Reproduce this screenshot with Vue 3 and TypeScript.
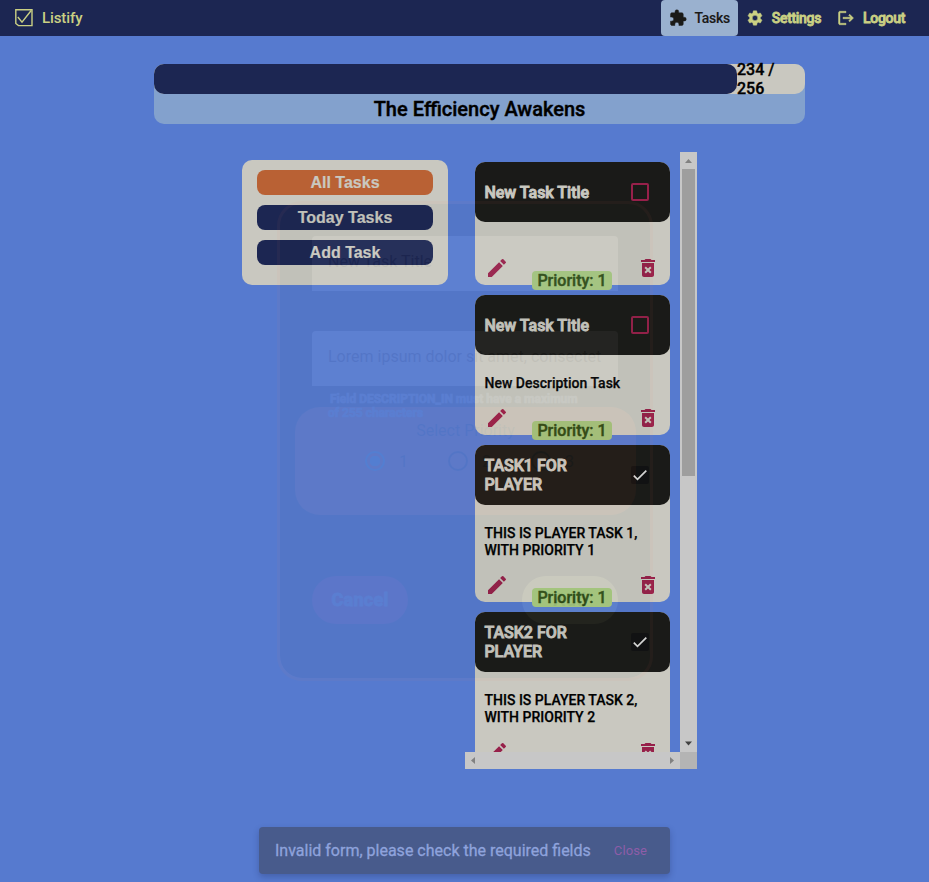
<script setup lang="ts">
interface Task {
  title: string
  description: string
  done: boolean
  priority: number
}

const tasks: Task[] = [
  { title: 'New Task Title', description: '', done: false, priority: 1 },
  { title: 'New Task Title', description: 'New Description Task', done: false, priority: 1 },
  { title: 'TASK1 FOR PLAYER', description: 'THIS IS PLAYER TASK 1, WITH PRIORITY 1', done: true, priority: 1 },
  { title: 'TASK2 FOR PLAYER', description: 'THIS IS PLAYER TASK 2, WITH PRIORITY 2', done: true, priority: 2 },
]

const filters = ['All Tasks', 'Today Tasks', 'Add Task']
const activeFilter = 'All Tasks'
const priorities = [1, 2, 3]
const selectedPriority = 1
</script>

<template>
  <div class="page">
    <nav class="navbar">
      <div class="brand">
        <svg width="18" height="18" viewBox="0 0 18 18" fill="none" stroke="currentColor">
          <path d="M.8.8H17V16.6H3.5L.8 14.5Z" stroke-width="1.4" />
          <path d="M2.8 8 7 13.2 16.2 1.5" stroke-width="1.4" />
        </svg>
        <span>Listify</span>
      </div>
      <div class="links">
        <a class="link active">
          <svg width="18" height="18" viewBox="0 0 24 24" fill="currentColor">
            <path d="M20.5 11H19V7c0-1.1-.9-2-2-2h-4V3.500a2.500 2.500 0 0 0-5 0V5H4c-1.100 0-1.990.9-1.990 2v3.800H3.500c1.490 0 2.700 1.210 2.700 2.700s-1.210 2.700-2.700 2.700H2V20c0 1.100.9 2 2 2h3.800v-1.500c0-1.490 1.210-2.700 2.700-2.700 1.490 0 2.700 1.210 2.700 2.700V22H17c1.100 0 2-.9 2-2v-4h1.500a2.500 2.500 0 0 0 0-5z" />
          </svg>
          <span>Tasks</span>
        </a>
        <a class="link">
          <svg width="18" height="18" viewBox="0 0 24 24" fill="currentColor">
            <path d="M19.140 12.940c.04-.3.060-.61.060-.94 0-.32-.02-.64-.07-.94l2.030-1.580c.18-.14.230-.41.120-.61l-1.920-3.320c-.12-.22-.37-.29-.59-.22l-2.390.96c-.5-.38-1.030-.7-1.620-.94l-.36-2.540c-.04-.24-.24-.41-.48-.41h-3.840c-.24 0-.43.17-.47.41l-.36 2.540c-.59.24-1.130.57-1.620.94l-2.390-.96c-.22-.08-.47 0-.59.22L2.740 8.870c-.12.21-.08.470.12.610l2.030 1.580c-.05.3-.09.63-.09.94s.02.640.070.940l-2.030 1.580c-.18.140-.23.410-.12.610l1.920 3.320c.12.220.37.290.59.220l2.390-.96c.5.380 1.030.700 1.620.940l.36 2.540c.05.240.24.410.48.410h3.840c.24 0 .44-.17.470-.41l.36-2.540c.59-.24 1.130-.56 1.620-.94l2.390.96c.22.080.470 0 .59-.22l1.920-3.320c.12-.22.070-.47-.12-.61l-2.010-1.580zM12 15.600A3.600 3.600 0 1 1 12 8.400a3.600 3.600 0 0 1 0 7.200z" />
          </svg>
          <span>Settings</span>
        </a>
        <a class="link">
          <svg width="18" height="18" viewBox="0 0 24 24" fill="currentColor">
            <path d="m17 7-1.410 1.410L18.170 11H8v2h10.170l-2.580 2.580L17 17l5-5zM4 5h8V3H4c-1.100 0-2 .9-2 2v14c0 1.100.9 2 2 2h8v-2H4V5z" />
          </svg>
          <span>Logout</span>
        </a>
      </div>
    </nav>

    <section class="level">
      <div class="track">
        <div class="fill"></div>
        <div class="count">234 / 256</div>
      </div>
      <div class="rank">The Efficiency Awakens</div>
    </section>

    <main class="board">
      <aside class="filters">
        <button v-for="f in filters" :key="f" class="filter" :class="{ on: f === activeFilter }">{{ f }}</button>
      </aside>

      <div class="scroller">
        <div class="viewport">
          <article v-for="(task, i) in tasks" :key="i" class="card">
            <header class="head">
              <span class="title">{{ task.title }}</span>
              <span v-if="!task.done" class="box"></span>
              <span v-else class="box done">
                <svg width="18" height="18" viewBox="0 0 18 18" fill="none" stroke="currentColor" stroke-width="1.7">
                  <path d="M2.800 9.700 6.500 13.400 15.300 4.600" />
                </svg>
              </span>
            </header>
            <p class="desc">{{ task.description }}</p>
            <footer class="actions">
              <svg width="24" height="24" viewBox="0 0 24 24" fill="currentColor">
                <path d="M3 17.250V21h3.750L17.810 9.940l-3.750-3.750L3 17.250zM20.710 7.040a1 1 0 0 0 0-1.410l-2.340-2.340a1 1 0 0 0-1.410 0l-1.830 1.830 3.750 3.750 1.830-1.830z" />
              </svg>
              <svg width="24" height="24" viewBox="0 0 24 24" fill="currentColor">
                <path fill-rule="evenodd" d="M6 19c0 1.100.9 2 2 2h8c1.100 0 2-.9 2-2V7H6v12zm2.460-7.120 1.410-1.410L12 12.590l2.120-2.120 1.410 1.410L13.410 14l2.120 2.120-1.410 1.410L12 15.410l-2.120 2.120-1.410-1.410L10.590 14l-2.130-2.120zM15.500 4l-1-1h-5l-1 1H5v2h14V4z" />
              </svg>
              <span class="badge">Priority: {{ task.priority }}</span>
            </footer>
          </article>
        </div>
        <div class="bar vertical">
          <svg width="17" height="17" viewBox="0 0 17 17"><path d="M8.500 7 12 11H5Z" fill="#818181" /></svg>
          <div class="thumb"></div>
          <svg width="17" height="17" viewBox="0 0 17 17"><path d="M8.500 10.500 12 6.500H5Z" fill="#414141" /></svg>
        </div>
        <div class="bar horizontal">
          <svg width="17" height="17" viewBox="0 0 17 17"><path d="M6 8.500 10 5V12Z" fill="#818181" /></svg>
          <svg width="17" height="17" viewBox="0 0 17 17"><path d="M11 8.500 7 5V12Z" fill="#818181" /></svg>
        </div>
        <div class="corner"></div>
      </div>
    </main>

    <form class="dialog">
      <div class="field">New Task Title</div>
      <div class="field second">Lorem ipsum dolor sit amet, consectet</div>
      <div class="error">Field DESCRIPTION_IN must have a maximum of 255 characters</div>
      <div class="priority">
        <div class="legend">Select Priority</div>
        <div class="radios">
          <label v-for="p in priorities" :key="p" class="radio" :class="{ picked: p === selectedPriority }">
            <i class="ring"></i><span>{{ p }}</span>
          </label>
        </div>
      </div>
      <div class="buttons">
        <span class="pill cancel">Cancel</span>
        <span class="pill confirm">Add</span>
      </div>
    </form>

    <div class="snackbar">
      <span class="message">Invalid form, please check the required fields</span>
      <span class="close">Close</span>
    </div>
  </div>
</template>

<style>
body {
  margin: 0;
  background: #567acf;
}
</style>

<style scoped>
.page {
  position: relative;
  height: 882px;
  overflow: hidden;
  background: #567acf;
  font-family: Roboto, sans-serif;
  font-size: 16px;
}
.page * {
  box-sizing: border-box;
}
svg {
  display: block;
  flex: none;
}
.navbar {
  height: 36px;
  background: #1c2652;
  color: #cad083;
  display: flex;
  justify-content: space-between;
  padding: 0 16px 0 15px;
}
.brand {
  display: flex;
  align-items: center;
  gap: 9px;
  font-size: 15px;
  font-weight: 500;
  letter-spacing: -0.1px;
}
.links {
  display: flex;
}
.link {
  display: flex;
  align-items: center;
  gap: 8px;
  padding: 0 8px;
  font-size: 14px;
  font-weight: 500;
  letter-spacing: -0.32px;
  -webkit-text-stroke: 0.8px currentColor;
  border-radius: 4px;
}
.link svg {
  stroke: currentColor;
  stroke-width: 0.6px;
}
.active {
  background: #9ab1cf;
  color: #1a1a18;
  -webkit-text-stroke: 0.1px currentColor;
}
.level {
  width: 651px;
  height: 60px;
  margin: 28px 0 0 154px;
  border-radius: 10px;
  background: #83a1cd;
}
.track {
  display: flex;
  align-items: center;
  height: 30px;
  border-radius: 10px;
  background: #c9c8c0;
}
.fill {
  width: 583px;
  height: 30px;
  border-radius: 10px;
  background: #1c2652;
}
.count {
  width: 60px;
  line-height: 19px;
  font-weight: 500;
  -webkit-text-stroke: 0.35px currentColor;
  color: #000;
}
.rank {
  line-height: 30px;
  text-align: center;
  font-size: 20px;
  font-weight: 500;
  -webkit-text-stroke: 0.4px currentColor;
  color: #000;
}
.board {
  display: flex;
  align-items: flex-start;
  padding: 28px 0 0 242px;
}
.filters {
  display: flex;
  flex-direction: column;
  gap: 10px;
  width: 206px;
  height: 125px;
  margin: 8px 17px 0 0;
  padding: 10px 15px;
  border-radius: 10px;
  background: #c9c8c0;
}
.filter {
  height: 25px;
  padding: 0;
  border: 0;
  border-radius: 8px;
  background: #1c2652;
  color: #c9c8c0;
  font: bold 16px 'Liberation Sans', sans-serif;
  -webkit-text-stroke: 0.2px currentColor;
}
.filter.on {
  background: #b96134;
}
.scroller {
  display: grid;
  grid-template: 600px 17px / 215px 17px;
}
.viewport {
  display: flex;
  flex-direction: column;
  gap: 10px;
  padding: 10px;
  overflow: hidden;
}
.card {
  flex: none;
  border-radius: 10px;
  background: #c9c8c0;
}
.head {
  display: flex;
  align-items: center;
  justify-content: space-between;
  height: 60px;
  padding: 0 21px 0 9.4px;
  border-radius: 10px;
  background: #1a1a18;
  color: #c9c8c0;
}
.title {
  width: 120px;
  line-height: 19px;
  font-weight: 500;
  -webkit-text-stroke: 0.9px currentColor;
}
.box {
  width: 18px;
  height: 18px;
  border: 2px solid #97204a;
  border-radius: 2px;
}
.box.done {
  border: 0;
  background: #111112;
  color: #dcdcdc;
}
.desc {
  margin: 0;
  padding: 20px 9px 0 9.5px;
  line-height: 17px;
  font-size: 14px;
  font-weight: 500;
  -webkit-text-stroke: 0.25px currentColor;
  color: #000;
}
.actions {
  position: relative;
  display: flex;
  justify-content: space-between;
  height: 43px;
  padding: 14px 10px 0 9.5px;
  color: #97204a;
}
.badge {
  position: absolute;
  left: 57px;
  bottom: -5px;
  width: 80px;
  height: 19px;
  border-radius: 4px;
  background: #a0c27c;
  color: #2c4a15;
  line-height: 19px;
  text-align: center;
  font-weight: 500;
  -webkit-text-stroke: 0.4px currentColor;
}
.bar {
  display: flex;
  background: #c7c7c7;
}
.vertical {
  flex-direction: column;
}
.vertical svg:last-child {
  margin-top: auto;
}
.thumb {
  width: 13px;
  height: 307px;
  margin: 0 2px;
  background: #9e9e9e;
}
.horizontal {
  justify-content: space-between;
}
.corner {
  background: #b4b4b4;
}
.dialog {
  position: absolute;
  left: 277px;
  top: 201px;
  width: 376px;
  height: 480px;
  padding: 32px 14px 0 15px;
  border: 3px solid #ff8058;
  border-radius: 25px;
  background: #22382c;
  background-clip: padding-box;
  opacity: 0.045;
  color: #222;
}
.field {
  width: 306px;
  height: 55px;
  margin-left: 17px;
  padding: 0 16px;
  border-radius: 4px 4px 0 0;
  background: #fff;
  line-height: 51px;
  white-space: nowrap;
}
.second {
  margin-top: 40px;
}
.error {
  position: relative;
  width: 258px;
  height: 21px;
  margin-left: 33px;
  padding-top: 6px;
  line-height: 14px;
  font-size: 12px;
  font-weight: 700;
  -webkit-text-stroke: 0.7px currentColor;
  text-indent: 2px;
  color: #b8d8ff;
}
.priority {
  height: 108px;
  padding-top: 14px;
  border-radius: 25px;
  background: #f0703c;
}
.legend {
  text-align: center;
  line-height: 20px;
}
.radios {
  display: flex;
  gap: 34px;
  padding: 10px 0 0 70px;
}
.radio {
  display: flex;
  align-items: center;
  gap: 14px;
  width: 49px;
}
.ring {
  flex: none;
  width: 20px;
  height: 20px;
  border: 2px solid #222;
  border-radius: 50%;
}
.picked .ring {
  border-color: #20e0ff;
  background: radial-gradient(circle, #20e0ff 5px, transparent 5.5px) padding-box no-repeat;
}
.buttons {
  display: flex;
  justify-content: space-between;
  width: 306px;
  margin: 61px 0 0 17px;
}
.pill {
  width: 96px;
  height: 48px;
  border-radius: 24px;
  line-height: 48px;
  text-align: center;
  font-size: 18px;
  font-weight: 700;
  letter-spacing: 0.3px;
}
.cancel {
  background: #d8305a;
  color: #b8d8ff;
  -webkit-text-stroke: 0.9px currentColor;
}
.confirm {
  background: #e8ffa0;
}
.snackbar {
  position: absolute;
  left: 259px;
  top: 827px;
  display: flex;
  align-items: center;
  justify-content: space-between;
  width: 411px;
  height: 47px;
  padding: 0 23px 0 16px;
  border-radius: 4px;
  background: #485b8c;
  color: #8fa3dc;
  box-shadow: 0 3px 6px rgba(30, 40, 90, 0.3);
}
.message {
  -webkit-text-stroke: 0.3px currentColor;
}
.close {
  color: #8e5da8;
  font-size: 13px;
  letter-spacing: 0.1px;
}
</style>
